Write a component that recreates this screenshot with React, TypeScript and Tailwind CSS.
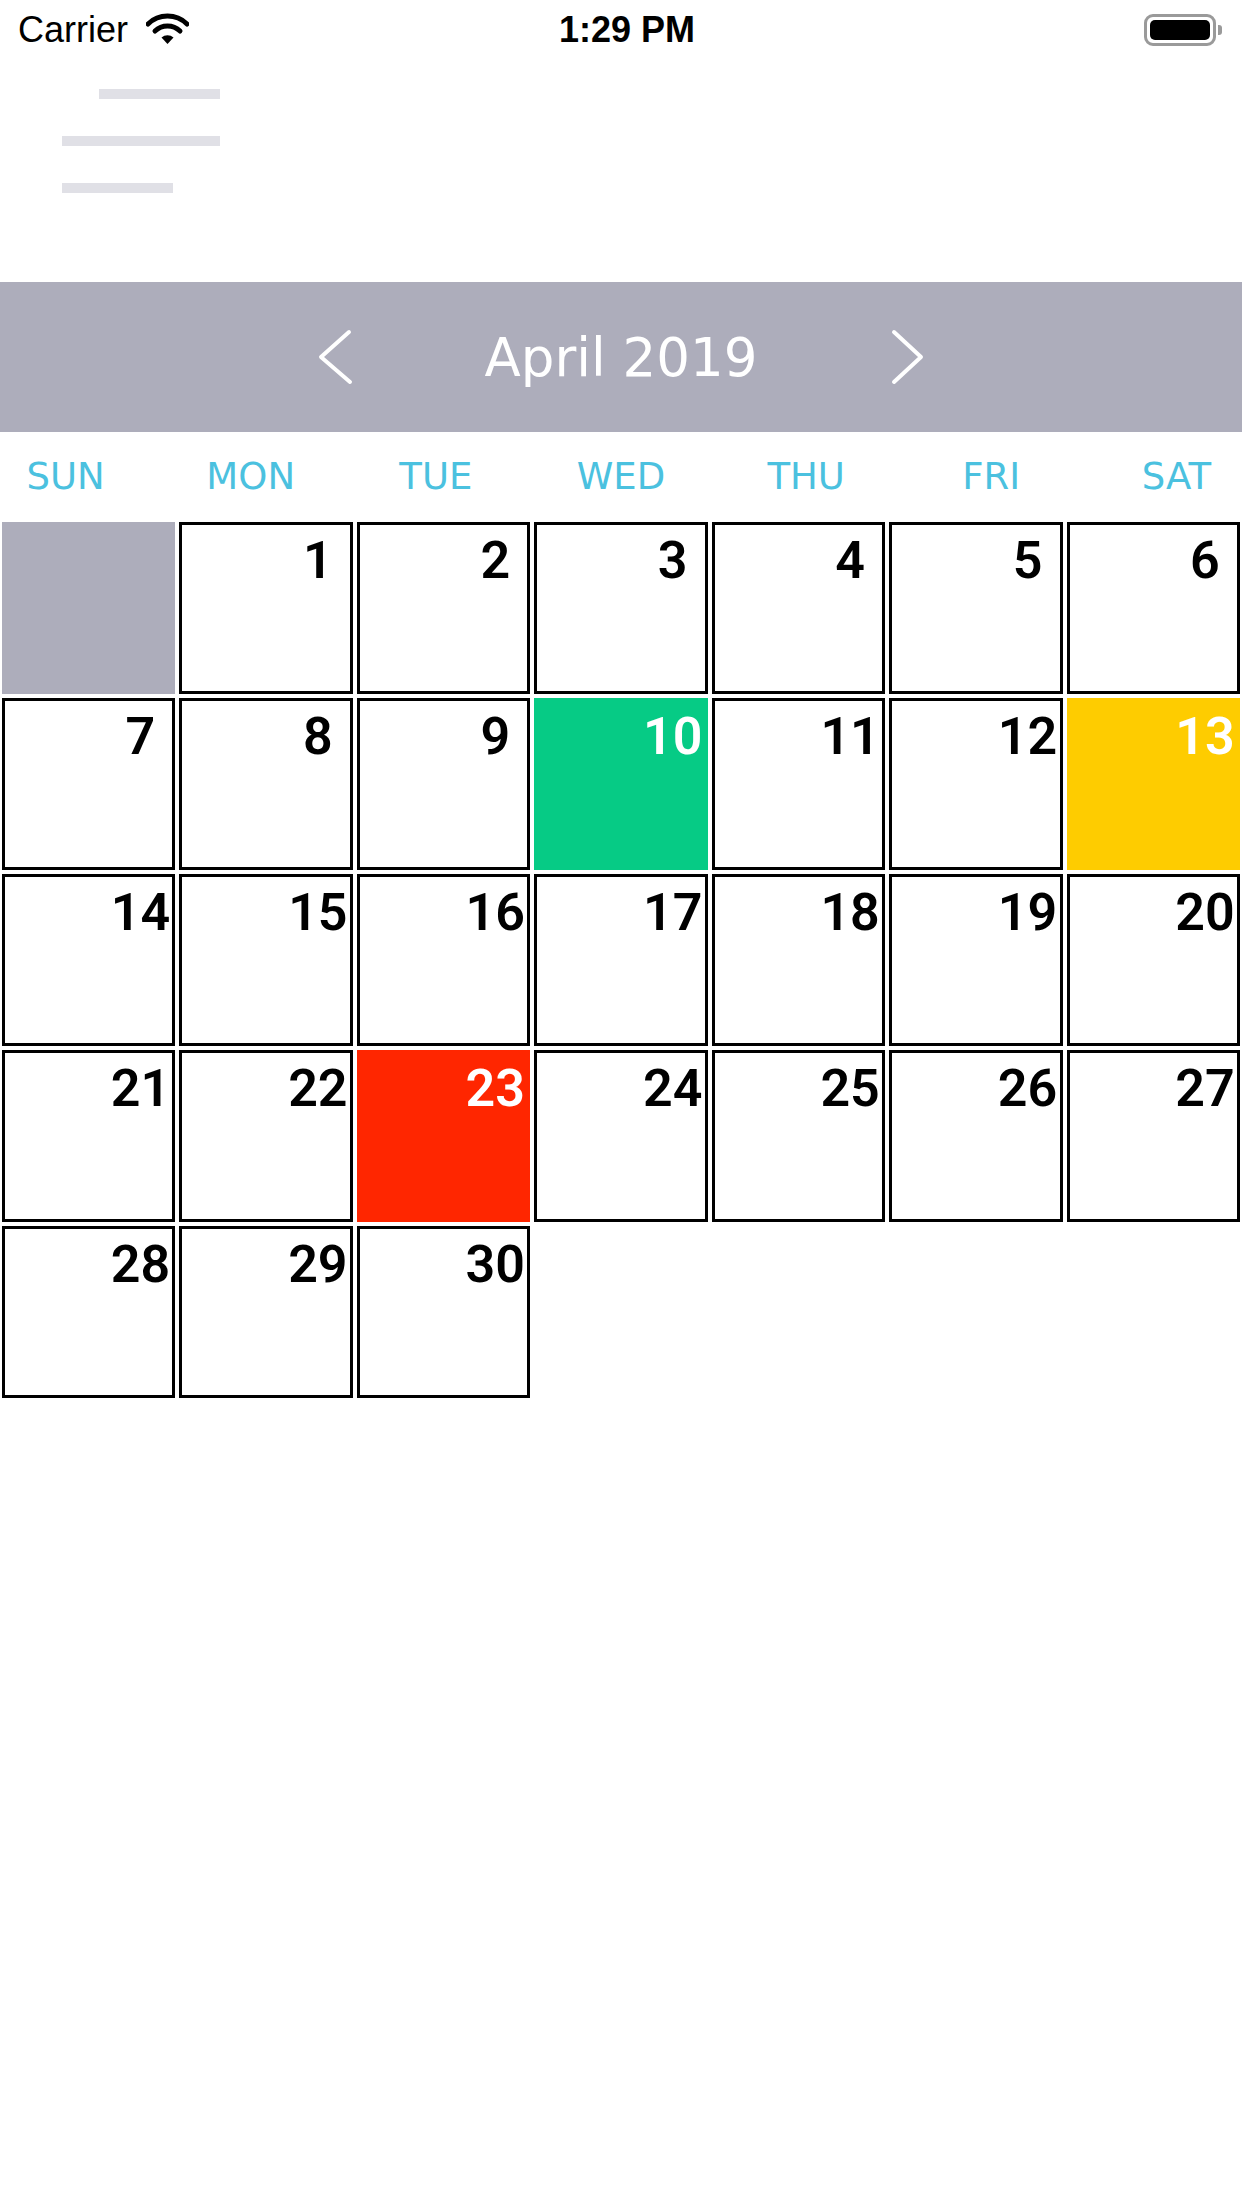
import React from "react";

const DAYS = ["SUN", "MON", "TUE", "WED", "THU", "FRI", "SAT"];

type Cell = { day?: number; bg?: string; empty?: boolean };

// marked days for April 2019
const MARKS: Record<number, string> = {
  10: "bg-[#06cb85] border-[#06cb85] text-white",
  13: "bg-[#fecc00] border-[#fecc00] text-white",
  23: "bg-[#ff2600] border-[#ff2600] text-white",
};

function buildWeeks(): Cell[][] {
  const cells: Cell[] = [{ bg: "bg-[#adadbb] border-[#adadbb]" }];
  for (let d = 1; d <= 30; d++) cells.push({ day: d, bg: MARKS[d] });
  while (cells.length < 35) cells.push({ empty: true });
  const weeks: Cell[][] = [];
  for (let i = 0; i < cells.length; i += 7) weeks.push(cells.slice(i, i + 7));
  return weeks;
}

function StatusBar() {
  return (
    <div className="h-[60px] flex items-center justify-between px-[18px] text-black font-['Liberation_Sans',Arial,sans-serif]">
      <div className="flex items-center gap-[18px] w-[300px]">
        <span className="text-[36px] leading-none">Carrier</span>
        <svg width="43" height="33" viewBox="0 0 43 33" className="-mt-[2px]">
          <path d="M2 11 A28 28 0 0 1 41 11" fill="none" stroke="black" strokeWidth="5" strokeLinecap="round" />
          <path d="M9 18 A18 18 0 0 1 34 18" fill="none" stroke="black" strokeWidth="5" strokeLinecap="round" />
          <path d="M15.5 24.5 L21.5 31 L27.5 24.5 A9 9 0 0 0 15.5 24.5 Z" fill="black" />
        </svg>
      </div>
      <span className="text-[36px] leading-none font-semibold ml-[12px]">1:29 PM</span>
      <div className="w-[300px] flex justify-end pr-[2px]">
        <div className="flex items-center">
          <div className="w-[72px] h-[32px] rounded-[9px] border-[3px] border-[#9a9a9a] p-[3px]">
            <div className="w-full h-full rounded-[5px] bg-black" />
          </div>
          <div className="w-[4px] h-[10px] rounded-r-[3px] bg-[#9a9a9a] ml-[2px]" />
        </div>
      </div>
    </div>
  );
}

function Hamburger() {
  return (
    <div className="h-[222px] pt-[29px] pl-[62px]">
      <div className="w-[158px] flex flex-col gap-[37px]">
        <div className="self-end w-[121px] h-[10px] bg-[#e0e0e6]" />
        <div className="w-[158px] h-[10px] bg-[#e0e0e6]" />
        <div className="self-start w-[111px] h-[10px] bg-[#e0e0e6]" />
      </div>
    </div>
  );
}

function MonthHeader() {
  return (
    <div className="h-[150px] bg-[#adadbb] flex items-center justify-center">
      <svg width="35" height="56" viewBox="0 0 35 56">
        <path d="M31 3 L3 28 L32 53" fill="none" stroke="white" strokeWidth="4" strokeLinecap="round" strokeLinejoin="round" />
      </svg>
      <div className="w-[536px] text-center text-white text-[53px] leading-none font-['DejaVu_Sans',Verdana,sans-serif]">
        April 2019
      </div>
      <svg width="35" height="56" viewBox="0 0 35 56">
        <path d="M5 3 L32 28 L5 53" fill="none" stroke="white" strokeWidth="4" strokeLinecap="round" strokeLinejoin="round" />
      </svg>
    </div>
  );
}

export default function App() {
  const weeks = buildWeeks();
  return (
    <div className="w-[1242px] h-[2208px] bg-white overflow-hidden">
      <StatusBar />
      <Hamburger />
      <MonthHeader />

      <div className="h-[88px] flex items-center -mx-[27px]">
        {DAYS.map((d) => (
          <div
            key={d}
            className="flex-1 text-center text-[37px] leading-none text-[#4bc1df] font-['DejaVu_Sans',Verdana,sans-serif]"
          >
            {d}
          </div>
        ))}
      </div>

      <div className="flex flex-col">
        {weeks.map((week, wi) => (
          <div key={wi} className="flex h-[176px]">
            {week.map((c, ci) => (
              <div key={ci} className="flex-1 p-[2px]">
                {!c.empty && (
                  <div
                    className={`h-full border-[3px] flex justify-end pt-[10px] ${
                      c.bg ?? "bg-white border-black text-black"
                    }`}
                  >
                    {c.day !== undefined && (
                      <span className="w-[64px] text-center text-[52px] leading-none font-semibold font-['Roboto','Liberation_Sans',Arial,sans-serif]">
                        {c.day}
                      </span>
                    )}
                  </div>
                )}
              </div>
            ))}
          </div>
        ))}
      </div>
    </div>
  );
}
